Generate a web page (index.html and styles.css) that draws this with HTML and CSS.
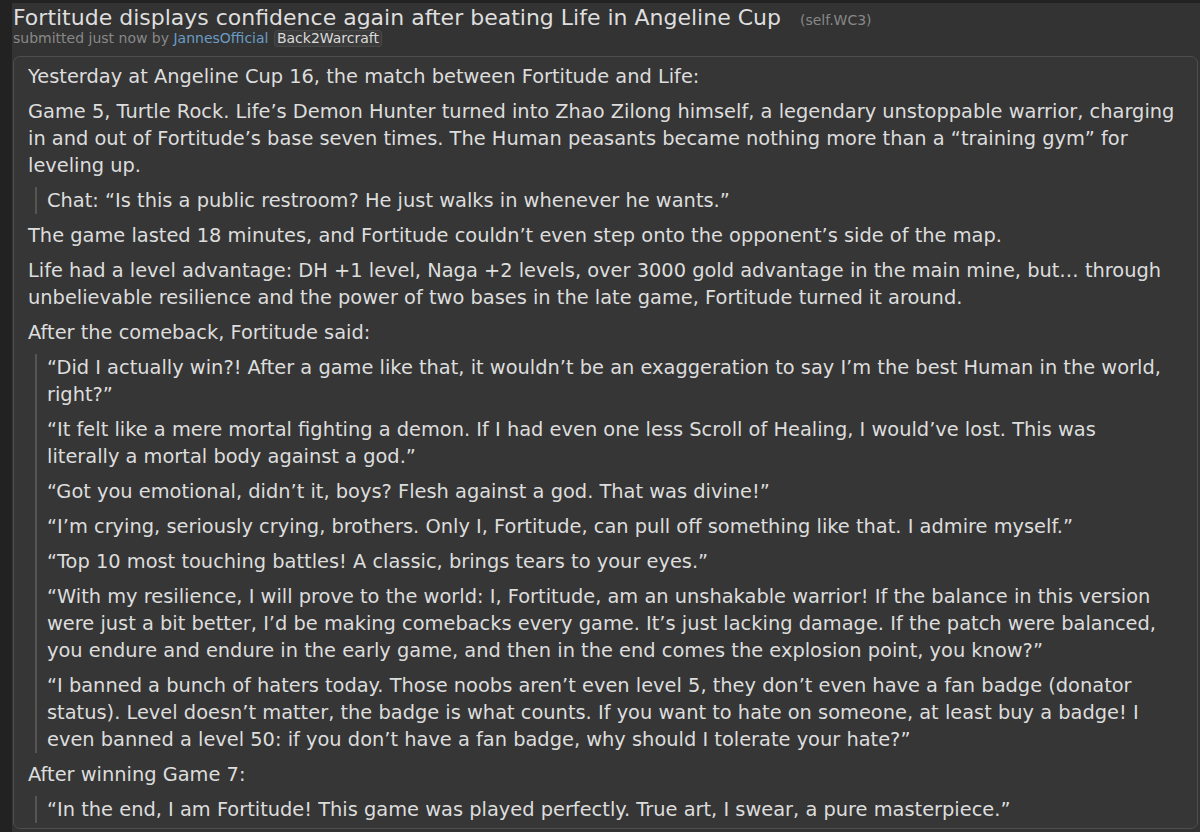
FILE: index.html
```html
<!DOCTYPE html>
<html lang="en">
<head>
<meta charset="utf-8">
<title>Fortitude displays confidence again after beating Life in Angeline Cup</title>
<link rel="stylesheet" href="styles.css">
</head>
<body>
<div class="page">
  <div class="head">
    <p class="title"><a class="title-link">Fortitude displays confidence again after beating Life in Angeline Cup</a> <span class="domain">(self.WC3)</span></p>
    <p class="tagline">submitted just now by <a class="author">JannesOfficial</a> <span class="flair">Back2Warcraft</span></p>
  </div>
  <div class="usertext">
    <p>Yesterday at Angeline Cup 16, the match between Fortitude and Life:</p>
    <p>Game 5, Turtle Rock. Life’s Demon Hunter turned into Zhao Zilong himself, a legendary unstoppable warrior, charging in and out of Fortitude’s base seven times. The Human peasants became nothing more than a “training gym” for leveling up.</p>
    <blockquote>
      <p>Chat: “Is this a public restroom? He just walks in whenever he wants.”</p>
    </blockquote>
    <p>The game lasted 18 minutes, and Fortitude couldn’t even step onto the opponent’s side of the map.</p>
    <p>Life had a level advantage: DH +1 level, Naga +2 levels, over 3000 gold advantage in the main mine, but… through unbelievable resilience and the power of two bases in the late game, Fortitude turned it around.</p>
    <p>After the comeback, Fortitude said:</p>
    <blockquote>
      <p>“Did I actually win?! After a game like that, it wouldn’t be an exaggeration to say I’m the best Human in the world, right?”</p>
      <p>“It felt like a mere mortal fighting a demon. If I had even one less Scroll of Healing, I would’ve lost. This was<br>literally a mortal body against a god.”</p>
      <p>“Got you emotional, didn’t it, boys? Flesh against a god. That was divine!”</p>
      <p>“I’m crying, seriously crying, brothers. Only I, Fortitude, can pull off something like that. I admire myself.”</p>
      <p>“Top 10 most touching battles! A classic, brings tears to your eyes.”</p>
      <p>“With my resilience, I will prove to the world: I, Fortitude, am an unshakable warrior! If the balance in this version were just a bit better, I’d be making comebacks every game. It’s just lacking damage. If the patch were balanced, you endure and endure in the early game, and then in the end comes the explosion point, you know?”</p>
      <p>“I banned a bunch of haters today. Those noobs aren’t even level 5, they don’t even have a fan badge (donator status). Level doesn’t matter, the badge is what counts. If you want to hate on someone, at least buy a badge! I even banned a level 50: if you don’t have a fan badge, why should I tolerate your hate?”</p>
    </blockquote>
    <p>After winning Game 7:</p>
    <blockquote>
      <p>“In the end, I am Fortitude! This game was played perfectly. True art, I swear, a pure masterpiece.”</p>
    </blockquote>
  </div>
</div>
</body>
</html>
```
FILE: styles.css
```css
html, body {
  margin: 0;
  padding: 0;
  background: #222222;
}
body {
  font-family: "DejaVu Sans", Verdana, sans-serif;
  color: #dddddd;
}
.page {
  margin: 3px 0 0 12px;
  background: #333333;
  min-height: calc(100vh - 3px);
  padding: 0 2px 0 1px;
  box-sizing: border-box;
  overflow: hidden;
}
.head {
  padding-top: 1px;
}
.title {
  margin: 0;
  height: 27px;
  font-size: 22px;
  line-height: 27px;
  color: #dddddd;
}
.title-link {
  color: #dedede;
}
.domain {
  font-size: 14px;
  line-height: 14px;
  color: #888888;
  margin-left: 12px;
}
.tagline {
  margin: -1px 0 0;
  height: 17px;
  font-size: 14px;
  line-height: 17px;
  color: #888888;
}
.author {
  color: #6a9cc4;
}
.flair {
  display: inline-block;
  background: #3b3b3b;
  border: 1px solid #474747;
  border-radius: 3px;
  color: #dadada;
  padding: 0 2px;
  line-height: 15px;
  margin-left: 1px;
}
.usertext {
  margin-top: 9px;
  border: 1px solid #4e4e4e;
  border-radius: 7px;
  background: #363636;
  padding: 6px 16px 5px 14px;
  font-size: 19.4px;
  line-height: 27px;
}
.usertext p {
  margin: 8px 0 0;
}
.usertext > p:first-child {
  margin-top: 0;
}
.usertext blockquote {
  margin: 8px 0 0 7px;
  padding-left: 10px;
  border-left: 2px solid #555555;
}
.usertext blockquote p:first-child {
  margin-top: 0;
}
```
